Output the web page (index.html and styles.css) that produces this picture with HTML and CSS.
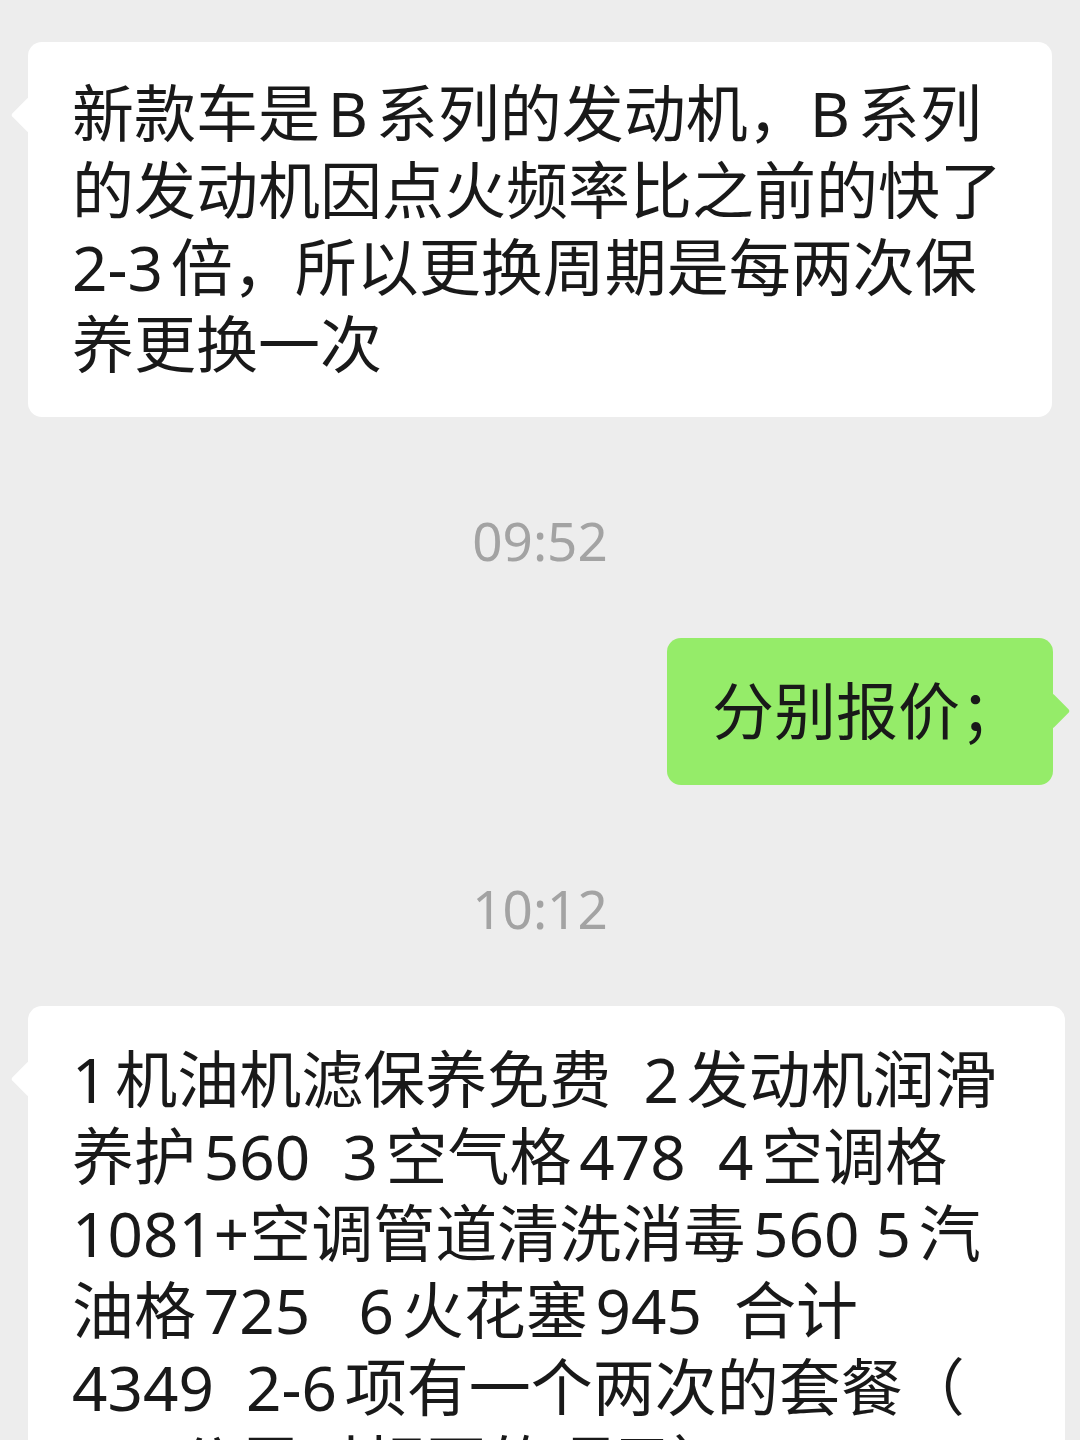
FILE: index.html
```html
<!DOCTYPE html>
<html lang="zh-CN">
<head>
	<meta charset="UTF-8">
	<title>聊天记录</title>
	<link rel="stylesheet" href="styles.css">
</head>
<body>
	<div id="chat">
		<div class="row left">
			<div class="bubble in">新款车是B系列的发动机，B系列<br>的发动机因点火频率比之前的快了<br>2-3倍，所以更换周期是每两次保<br>养更换一次</div>
		</div>
		<div class="time">09:52</div>
		<div class="row right">
			<div class="bubble out">分别报价；</div>
		</div>
		<div class="time">10:12</div>
		<div class="row left">
			<div class="bubble in wide">1机油机滤保养免费  2发动机润滑<br>养护560  3空气格478  4空调格<br>1081+空调管道清洗消毒560 5汽<br>油格725   6火花塞945  合计<br>4349  2-6项有一个两次的套餐（<br>1万公里时相同的项目）2580，下</div>
		</div>
	</div>
</body>
</html>
```

FILE: styles.css
```css
html,body {
	margin: 0;
	padding: 0;
	background: #ededed;
	height: 1440px;
	overflow: hidden;
}
#chat {
	padding: 42px 0 0;
	font-family: "Noto Sans", "Noto Sans CJK SC", sans-serif;
	color: #191919;
}
.row {
	display: flex;
}
.row.left {
	justify-content: flex-start;
	padding-left: 28px;
}
.row.right {
	justify-content: flex-end;
	padding-right: 27px;
}
.bubble {
	position: relative;
	font-size: 62px;
	line-height: 77px;
	border-radius: 14px;
	white-space: pre-wrap;
	text-autospace: normal;
}
.bubble.in {
	background: #fff;
	padding: 33px 50px 34px 44px;
}
.bubble.wide {
	padding: 35px 64px 34px 44px;
}
.bubble.out {
	background: #95ec69;
	padding: 35px 31px 35px 45px;
}
.bubble::before {
	content: "";
	position: absolute;
	top: 60px;
	width: 26px;
	height: 26px;
	border-radius: 3px;
	transform: rotate(45deg);
}
.bubble.in::before {
	left: -12px;
	background: #fff;
}
.bubble.out::before {
	right: -12px;
	background: #95ec69;
}
.time {
	margin: 94px 0 67px;
	height: 60px;
	line-height: 60px;
	text-align: center;
	font-family: "Noto Sans", "Liberation Sans", sans-serif;
	font-size: 53px;
	color: #a3a3a3;
}
```
